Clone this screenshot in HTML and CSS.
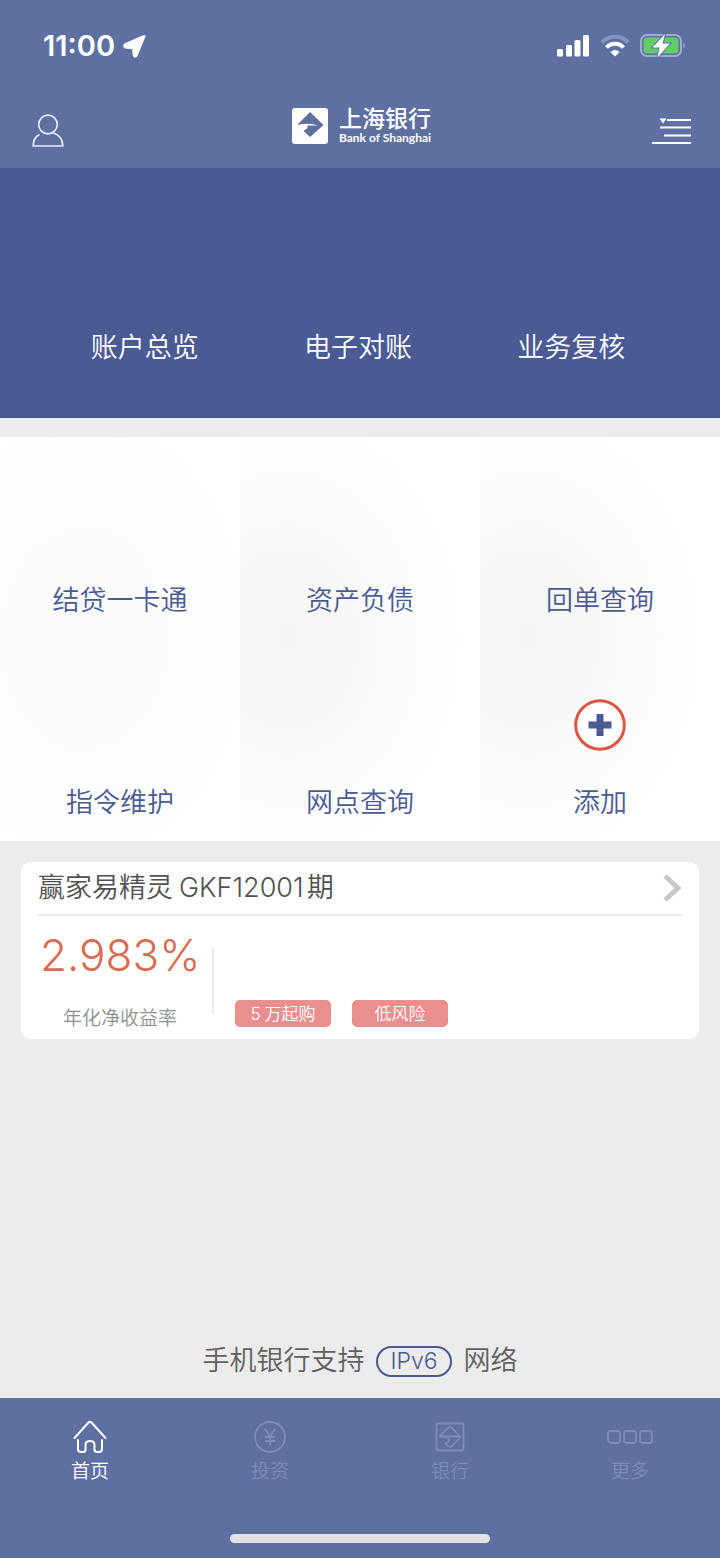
FILE: index.html
```html
<!DOCTYPE html>
<html lang="zh-CN">
<head>
<meta charset="utf-8">
<meta name="viewport" content="width=device-width, initial-scale=1">
<title>上海银行</title>
<link rel="stylesheet" href="styles.css">
</head>
<body>
<div class="app">
  <header class="top">
    <div class="status">
      <div class="status-left">
        <span class="time">11:00</span>
        <svg width="23" height="23" viewBox="0 0 23 23" aria-hidden="true"><path d="M21.500 2 14 20.500Q12 23.500 10.500 20.500L9.800 13.500 2.500 12.800Q-.8 11 2 9L20 1.200Q22.500 .2 21.500 2Z" fill="#fff" stroke="#fff" stroke-width="1.400" stroke-linejoin="round"/></svg>
      </div>
      <div class="status-right">
        <svg width="33" height="22" viewBox="0 0 33 22" fill="#fff" aria-hidden="true"><rect x="0" y="14" width="6" height="7.500" rx="1.500"/><rect x="9" y="10" width="6" height="11.500" rx="1.500"/><rect x="17.500" y="5" width="6" height="16.500" rx="1.500"/><rect x="26" y="0" width="6" height="21.500" rx="1.500"/></svg>
        <svg width="30" height="22" viewBox="0 0 30 22" fill="none" aria-hidden="true"><path d="M2 7.500C9-.2 21-.2 28 7.500" stroke="#8492bd" stroke-width="4"/><path d="M6.500 12.500C11 7.500 19 7.500 23.500 12.500" stroke="#fff" stroke-width="4"/><path d="M10.500 17Q15 13 19.500 17L15 21.500Z" fill="#fff"/></svg>
        <svg width="46" height="26" viewBox="0 0 46 26" aria-hidden="true"><rect x="1" y="2" width="40" height="21" rx="6" fill="none" stroke="#a0aacb" stroke-width="2"/><rect x="3.500" y="4.500" width="35" height="16" rx="3.500" fill="#62cc68"/><path d="M43.500 9.500Q46.500 12.500 43.500 15.500Z" fill="#a0aacb"/><path d="M25 1 12.500 14.500H19.500L17.500 24.500 30 10.500H22.500Z" fill="#fff" stroke="#5e70a2" stroke-width="2" paint-order="stroke"/></svg>
      </div>
    </div>
    <div class="nav">
      <button class="icon-button" aria-label="我的">
        <svg width="32" height="34" viewBox="0 0 32 34" fill="none" stroke="#e4ecff" stroke-width="1.700" aria-hidden="true"><circle cx="16" cy="10.500" r="9.300"/><path d="M7.500 20.500C3.500 22.500 1.200 26 1.200 32H30.800C30.800 26 28 20.800 20.500 18.800"/></svg>
      </button>
      <div class="brand">
        <svg width="36" height="36" viewBox="0 0 36 36" aria-hidden="true"><rect width="36" height="36" rx="3" fill="#fff"/><path d="M18 4 31.500 17 18 29 11.500 23 15.500 20V17.500H26Q17 14.500 5 17Z" fill="#5e70a2"/></svg>
        <div class="brand-text"><span class="brand-cn">上海银行</span><span class="brand-en">Bank of Shanghai</span></div>
      </div>
      <button class="icon-button" aria-label="菜单">
        <svg width="39" height="29" viewBox="0 0 39 29" fill="none" stroke="#fff" stroke-width="2" aria-hidden="true"><path d="M15 3H39M8 10.500H39M12 18.500H39M0 26H39"/><path d="M7.500 1.500H14.500L11 6.500Z" fill="#fff" stroke="none"/></svg>
      </button>
    </div>
  </header>
  <nav class="quick">
    <a href="#accounts">账户总览</a>
    <a href="#statement">电子对账</a>
    <a href="#review">业务复核</a>
  </nav>
  <main class="content">
    <div class="services">
      <div class="column column-first"><a href="#card">结贷一卡通</a><a href="#orders">指令维护</a></div>
      <div class="column column-shaded"><a href="#assets">资产负债</a><a href="#branches">网点查询</a></div>
      <div class="column column-shaded"><a href="#receipts">回单查询</a><a href="#add">
        <svg width="52" height="52" viewBox="0 0 52 52" aria-hidden="true"><circle cx="26" cy="26" r="24.300" fill="#fff" stroke="#dc5442" stroke-width="3"/><path d="M22.500 15H29.500V22.500H37.500V29.500H29.500V37H22.500V29.500H14.500V22.500H22.500Z" fill="#4a5a96"/></svg>
        添加</a></div>
    </div>
    <article class="product">
      <a class="product-title" href="#product">
        <span>赢家易精灵<span class="latin">GKF12001</span>期</span>
        <svg width="20" height="28" viewBox="0 0 20 28" fill="none" stroke="#c8c8c8" stroke-width="5" aria-hidden="true"><path d="M3 2 16 14 3 26"/></svg>
      </a>
      <div class="product-body">
        <div class="yield"><strong>2.983%</strong><span>年化净收益率</span></div>
        <div class="tags"><span><span class="digit">5</span>万起购</span><span>低风险</span></div>
      </div>
    </article>
    <p class="support">手机银行支持<span class="pill">IPv6</span>网络</p>
  </main>
  <footer class="tabbar">
    <nav class="tabs">
      <a class="active" href="#home"><svg width="34" height="34" viewBox="0 0 34 34" fill="none" stroke="currentColor" stroke-width="2" stroke-linecap="round" stroke-linejoin="round" aria-hidden="true"><path d="M1.500 18 15.500 2.500Q17 1 18.500 2.500L32.500 18M5 20V29Q5 32 8 32H10Q12.500 32 12.500 29.500V25Q12.500 21 17 21T21.500 25V29.500Q21.500 32 24 32H26Q29 32 29 29V20"/></svg>首页</a>
      <a href="#invest"><svg width="34" height="34" viewBox="0 0 34 34" fill="none" stroke="currentColor" stroke-width="1.800" aria-hidden="true"><circle cx="17" cy="17" r="15"/><path d="M11.500 8.500 17 16.500 22.500 8.500M17 16.500V25.500M12 17H22M12 21H22"/></svg>投资</a>
      <a href="#bank"><svg width="34" height="34" viewBox="0 0 34 34" fill="none" stroke="currentColor" stroke-width="1.800" stroke-linejoin="round" aria-hidden="true"><rect x="3.500" y="3.500" width="27" height="27" rx="1.500"/><path d="M6.500 16.500 15 8Q17 6 19 8L27.500 17 19 26Q17 28 15 25.500L12.500 23.500 16 21V17M6.500 16.500H27.500"/></svg>银行</a>
      <a href="#more"><svg width="46" height="34" viewBox="0 0 46 34" fill="none" stroke="currentColor" stroke-width="1.800" aria-hidden="true"><rect x="1" y="11" width="12" height="12" rx="3"/><rect x="17" y="11" width="12" height="12" rx="3"/><rect x="33" y="11" width="12" height="12" rx="3"/></svg>更多</a>
    </nav>
    <div class="home-bar"></div>
  </footer>
</div>
</body>
</html>
```
FILE: styles.css
```css
* { box-sizing: border-box; }
body {
  margin: 0;
  font-family: Inter, "Noto Sans CJK SC", sans-serif;
  font-size: 27px;
  font-weight: 350;
  line-height: 36px;
  background: #ececec;
}
a { color: inherit; text-decoration: none; }
svg { display: block; flex: none; }
.app { min-height: 100vh; display: flex; flex-direction: column; }

.top { background: #5e70a2; color: #fff; padding-bottom: 16px; }
.status { display: flex; justify-content: space-between; align-items: center; height: 92px; padding: 0 34px 0 43px; }
.status-left { display: flex; align-items: center; gap: 8px; }
.time { font-size: 29px; font-weight: 600; }
.status-right { display: flex; align-items: center; gap: 10px; }
.nav { display: grid; grid-template-columns: 1fr auto 1fr; align-items: center; height: 60px; padding: 0 29px 0 32px; }
.icon-button { padding: 0; border: 0; background: none; justify-self: start; margin-top: 18px; }
.icon-button:last-child { justify-self: end; }
.brand { display: flex; align-items: center; gap: 11px; margin-top: 8px; }
.brand-text { display: flex; flex-direction: column; }
.brand-cn { font-size: 23px; font-weight: 500; line-height: 24px; }
.brand-en { font-family: Lato, sans-serif; font-size: 12px; font-weight: 700; line-height: 14px; }

.quick {
  display: grid; grid-template-columns: repeat(3, 1fr);
  height: 250px; padding: 0 42px 52px 38px;
  align-items: end; text-align: center;
  background: #4a5a92; color: #fff;
}

.content { flex: 1; display: flex; flex-direction: column; padding-top: 19px; }
.services { display: grid; grid-template-columns: repeat(3, 1fr); background: #fff; color: #4a5a92; }
.column { display: grid; grid-template-rows: 202px 202px; }
.column a { display: flex; flex-direction: column; align-items: center; justify-content: flex-end; gap: 34px; padding-bottom: 20px; }
.column-first { background: radial-gradient(ellipse 180px 240px at 35% 50%, #fafafa, #fff); }
.column-shaded { background: radial-gradient(ellipse 180px 230px at 20% 50%, #f5f5f5, #fff); }

.product { margin: 21px 21px 0; padding: 0 17px 8px; border-radius: 10px; background: #fff; }
.product-title { display: flex; align-items: center; justify-content: space-between; height: 54px; border-bottom: 2px solid #e8e8e8; color: #505050; }
.latin { margin: 0 3px 0 6px; }
.product-body { display: flex; height: 115px; }
.yield { position: relative; display: flex; flex-direction: column; justify-content: space-between; width: 176px; padding: 15px 14px 0 2px; }
.yield::after { content: ""; position: absolute; right: 0; top: 32px; height: 66px; border-right: 2px solid #ececec; }
.yield strong { font-size: 44px; font-weight: 350; line-height: 48px; color: #d96b51; }
.yield > span { align-self: center; font-size: 19px; line-height: 24px; color: #8f8f8f; }
.tags { display: flex; align-items: flex-end; gap: 21px; padding: 0 0 4px 21px; }
.tags > span { width: 96px; padding-top: 1px; border-radius: 5px; background: #eb8e8e; color: #fff; font-size: 17px; line-height: 26px; text-align: center; }
.digit { margin-right: 4px; }

.support { display: flex; align-items: center; justify-content: center; gap: 12px; margin: auto 0 0; padding: 24px 0 19px; color: #606060; }
.pill { padding: 0 12px; border: 2px solid #4a5a92; border-radius: 16px; color: #4a5a92; font-size: 23px; line-height: 27px; }

.tabbar { display: flex; flex-direction: column; justify-content: space-between; align-items: center; height: 160px; padding: 22px 0 15px; background: #5e70a2; }
.tabs { display: grid; grid-template-columns: repeat(4, 1fr); width: 100%; }
.tabs a { display: flex; flex-direction: column; align-items: center; gap: 4px; color: #7c8cba; font-size: 19px; line-height: 28px; }
.tabs .active { color: #fff; }
.home-bar { width: 36%; height: 9px; border-radius: 5px; background: #e2e2e6; }
```
